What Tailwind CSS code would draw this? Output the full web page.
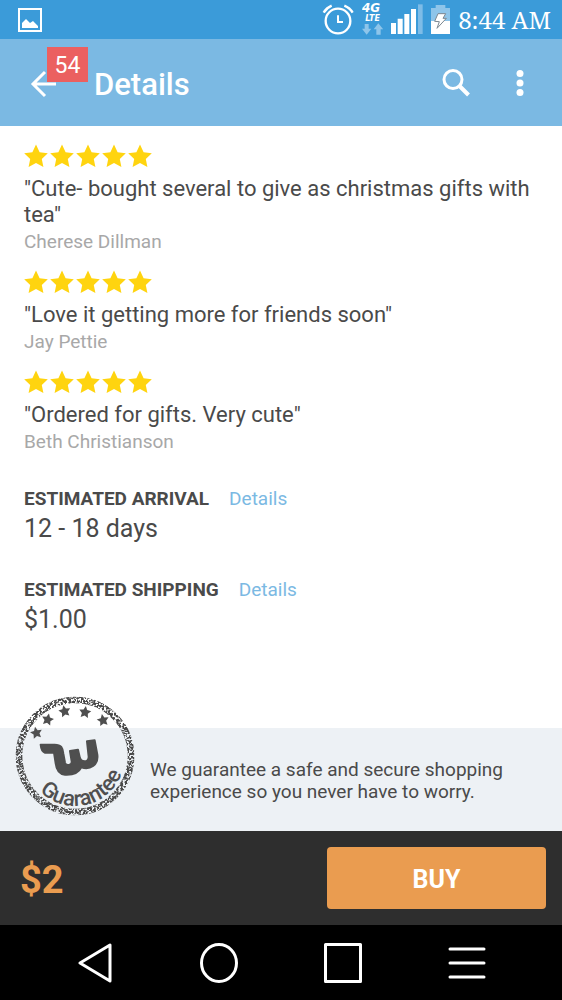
<!DOCTYPE html>
<html lang="en">
<head>
  <meta charset="UTF-8">
  <meta name="viewport" content="width=device-width, initial-scale=1.0">
  <title>Details</title>
  <script src="https://cdn.jsdelivr.net/npm/@tailwindcss/browser@4"></script>
</head>
<body class="flex min-h-screen flex-col bg-white font-[Roboto,sans-serif] text-[#4a4a4a]">
  <svg class="hidden">
    <symbol id="stars" viewBox="0 0 128 24">
      <g fill="#ffd40f">
        <path id="star" d="M12 .5l3.600 7.700 8.200 1-6 5.800 1.600 8-7.400-3.900-7.400 3.900 1.600-8-6-5.800 8.200-1z"/>
        <use href="#star" x="26"/>
        <use href="#star" x="52"/>
        <use href="#star" x="78"/>
        <use href="#star" x="104"/>
      </g>
    </symbol>
  </svg>

  <!-- Status bar -->
  <div class="flex h-[39px] items-center justify-between bg-[#3b9bd9] pr-[11px] pl-[18px] text-white">
    <svg class="size-6" viewBox="0 0 24 24" fill="none">
      <path d="M1 1h22v22H1z" stroke="#fff" stroke-width="2"/>
      <path d="M4 20v-5l4-4 4 4 3-2 5 5v2z" fill="#fff"/>
    </svg>
    <div class="flex items-center gap-2">
      <svg class="h-[39px] w-8" viewBox="42 0 96 117" fill="none" stroke="#fff">
        <circle cx="90" cy="63" r="37" stroke-width="7"/>
        <path d="M90 46v20h15" stroke-width="6"/>
        <path d="M47 38q8-14 24-21M109 17q17 7 25 21" stroke-width="7"/>
      </svg>
      <svg class="h-[39px] w-[21px]" viewBox="162 0 63 117" fill="#fff">
        <text x="162" y="35" font-family="DejaVu Sans, sans-serif" font-size="36" font-weight="700" font-style="italic">4G</text>
        <text x="172" y="62" font-family="DejaVu Sans, sans-serif" font-size="24" font-weight="700" font-style="italic">LTE</text>
        <path d="M170 72h12v14h8l-14 18-14-18h8zM205 104h13V88h8l-15-18-14 18h8z" fill="#8ec5ea"/>
      </svg>
      <svg class="h-[39px] w-8" viewBox="249 0 96 117" fill="#fff">
        <path d="M249 69h15v33h-15zM269 56h15v46h-15zM289 42h15v60h-15zM309 27h15v75h-15z"/>
        <path d="M330 13h14v89h-14z" fill="#7ebce7"/>
      </svg>
      <svg class="h-[39px] w-[19px]" viewBox="370 0 57 117">
        <path d="M370 24h14v-9h29v9h14v40h-57z" fill="#8ec5ea"/>
        <path d="M370 63h57v39h-57z" fill="#fff"/>
        <path d="M391 41h23l-8 14h10l-28 30 7-20-14-1z" fill="#fff" stroke="#7c8790" stroke-width="3"/>
      </svg>
      <span class="font-['Noto_Serif','Liberation_Serif',serif] text-[24px] leading-none">8:44 AM</span>
    </div>
  </div>

  <!-- App bar -->
  <header class="flex h-[87px] items-center bg-[#7bb9e3] pr-[18px] pl-7 text-white">
    <button type="button" aria-label="Back, 54 notifications" class="relative h-12 w-[66px]">
      <svg class="h-12 w-8" viewBox="0 0 32 48" fill="none" stroke="#fff" stroke-width="3">
        <path d="M28 25H5M17 13L5 25l12 12"/>
      </svg>
      <span class="absolute -top-3 left-[19px] flex h-[35px] w-[41px] items-center justify-center bg-[#eb6060] pt-1 text-[23px]">54</span>
    </button>
    <h1 class="flex-1 pt-1 text-[31px] leading-9 font-medium">Details</h1>
    <button type="button" aria-label="Search" class="flex size-12 items-center justify-center">
      <svg class="size-7" viewBox="0 0 28 28" fill="none" stroke="#fff">
        <circle cx="11" cy="10.500" r="9" stroke-width="3"/>
        <path d="M17.500 17L26.500 26" stroke-width="4"/>
      </svg>
    </button>
    <button type="button" aria-label="More options" class="ml-4 flex size-12 items-center justify-center">
      <svg class="h-7 w-2" viewBox="0 0 8 28" fill="#fff">
        <circle cx="4" cy="4.500" r="3.500"/><circle cx="4" cy="14" r="3.500"/><circle cx="4" cy="23.500" r="3.500"/>
      </svg>
    </button>
  </header>

  <main class="flex-1 px-6 pt-[18px] pb-16">
    <!-- Reviews -->
    <div class="space-y-[17px]">
      <article>
        <svg class="h-6 w-32" role="img" aria-label="5 stars"><use href="#stars"/></svg>
        <p class="mt-2 text-[22px] leading-[26px]">"Cute- bought several to give as christmas gifts with tea"</p>
        <p class="mt-[3px] text-[19px] leading-[22px] text-[#a8a8a8]">Cherese Dillman</p>
      </article>
      <article>
        <svg class="h-6 w-32" role="img" aria-label="5 stars"><use href="#stars"/></svg>
        <p class="mt-2 text-[22px] leading-[26px]">"Love it getting more for friends soon"</p>
        <p class="mt-[3px] text-[19px] leading-[22px] text-[#a8a8a8]">Jay Pettie</p>
      </article>
      <article>
        <svg class="h-6 w-32" role="img" aria-label="5 stars"><use href="#stars"/></svg>
        <p class="mt-2 text-[22px] leading-[26px]">"Ordered for gifts. Very cute"</p>
        <p class="mt-[3px] text-[19px] leading-[22px] text-[#a8a8a8]">Beth Christianson</p>
      </article>
    </div>

    <!-- Delivery -->
    <section class="mt-[34px]">
      <div class="flex gap-5 text-[19px] leading-6">
        <h2 class="font-bold">ESTIMATED ARRIVAL</h2>
        <a href="#" class="text-[#7bb9e3]">Details</a>
      </div>
      <p class="mt-0.5 text-[25px] leading-8">12 - 18 days</p>
    </section>
    <section class="mt-[33px]">
      <div class="flex gap-5 text-[19px] leading-6">
        <h2 class="font-bold">ESTIMATED SHIPPING</h2>
        <a href="#" class="text-[#7bb9e3]">Details</a>
      </div>
      <p class="mt-0.5 text-[25px] leading-8">$1.00</p>
    </section>
  </main>

  <!-- Guarantee -->
  <section class="relative bg-[#edf1f5] pt-[31px] pr-6 pb-7 pl-[150px]">
    <svg class="absolute -top-8 left-[15px] size-[120px]" viewBox="45 48 360 360" role="img" aria-label="Wish guarantee seal">
      <defs>
        <filter id="grain" x="-10%" y="-10%" width="120%" height="120%">
          <feTurbulence type="fractalNoise" baseFrequency="0.16" numOctaves="2" seed="4"/>
          <feColorMatrix values="0 0 0 0 0  0 0 0 0 0  0 0 0 0 0  6 0 0 0 -2.3"/>
          <feComposite in="SourceGraphic" operator="in"/>
        </filter>
        <path id="seal-arc" d="M75 228a150 150 0 0 0 300 0"/>
        <path id="seal-star" d="M0-19l5.500 11.500L18-6 9 3l2 12.500L0 9.500-11 15.500-9 3l-9-9 12.500-1.500z"/>
      </defs>
      <circle cx="225" cy="228" r="168" fill="none" stroke="#4a4a4a" stroke-width="20" filter="url(#grain)"/>
      <g fill="#4f4f4f">
        <use href="#seal-star" transform="translate(109 159) rotate(-12)"/>
        <use href="#seal-star" transform="translate(143 119) rotate(12)"/>
        <use href="#seal-star" transform="translate(194 94) rotate(-12)"/>
        <use href="#seal-star" transform="translate(255 97) rotate(8)"/>
        <use href="#seal-star" transform="translate(309 121) rotate(-10)"/>
        <text font-family="Roboto, sans-serif" font-size="65" font-weight="500"><textPath href="#seal-arc" startOffset="117">Guarantee</textPath></text>
      </g>
      <path d="M122 194L164 194C184 194 188 203 190 221L195 248C198 259 217 257 215 244L210 213L234 209L239 231C243 249 267 248 266 230L261 184L284 181L292 224C296 255 270 271 244 262C235 281 215 285 195 284C176 282 169 267 167 250L162 218L135 218Q124 215 122 194Z" fill="#4f4f4f" stroke="#4f4f4f" stroke-width="6" stroke-linejoin="round"/>
    </svg>
    <p class="max-w-[360px] text-[19px] leading-[22px]">We guarantee a safe and secure shopping experience so you never have to worry.</p>
  </section>

  <!-- Buy bar -->
  <div class="flex h-[94px] items-center justify-between bg-[#2e2e2e] pr-4 pl-5">
    <span class="pt-1 text-[38px] font-bold text-[#ea9c50]">$2</span>
    <button type="button" class="h-[62px] w-5/12 rounded-sm bg-[#ea9c50] pt-1 text-[25px] font-bold text-white">BUY</button>
  </div>

  <!-- System navigation -->
  <nav class="grid h-[75px] grid-cols-4 items-center bg-black px-[33px]">
    <button type="button" aria-label="Back" class="flex justify-center">
      <svg class="h-10 w-[38px]" viewBox="0 0 38 40" fill="none" stroke="#fff" stroke-width="3" stroke-linejoin="round"><path d="M34 2v36L4 20z"/></svg>
    </button>
    <button type="button" aria-label="Home" class="flex justify-center">
      <svg class="h-10 w-[38px]" viewBox="0 0 38 40" fill="none" stroke="#fff" stroke-width="3"><ellipse cx="19" cy="20" rx="17.500" ry="18.500"/></svg>
    </button>
    <button type="button" aria-label="Recent apps" class="flex justify-center">
      <svg class="h-10 w-[38px]" viewBox="0 0 38 40" fill="none" stroke="#fff" stroke-width="3" stroke-linejoin="round"><path d="M1.500 1.500h35v37h-35z"/></svg>
    </button>
    <button type="button" aria-label="Menu" class="flex justify-center">
      <svg class="h-10 w-[38px]" viewBox="0 0 38 40" fill="none" stroke="#fff" stroke-width="3" stroke-linecap="round"><path d="M2 6h34M2 20h34M2 34h34"/></svg>
    </button>
  </nav>
</body>
</html>
